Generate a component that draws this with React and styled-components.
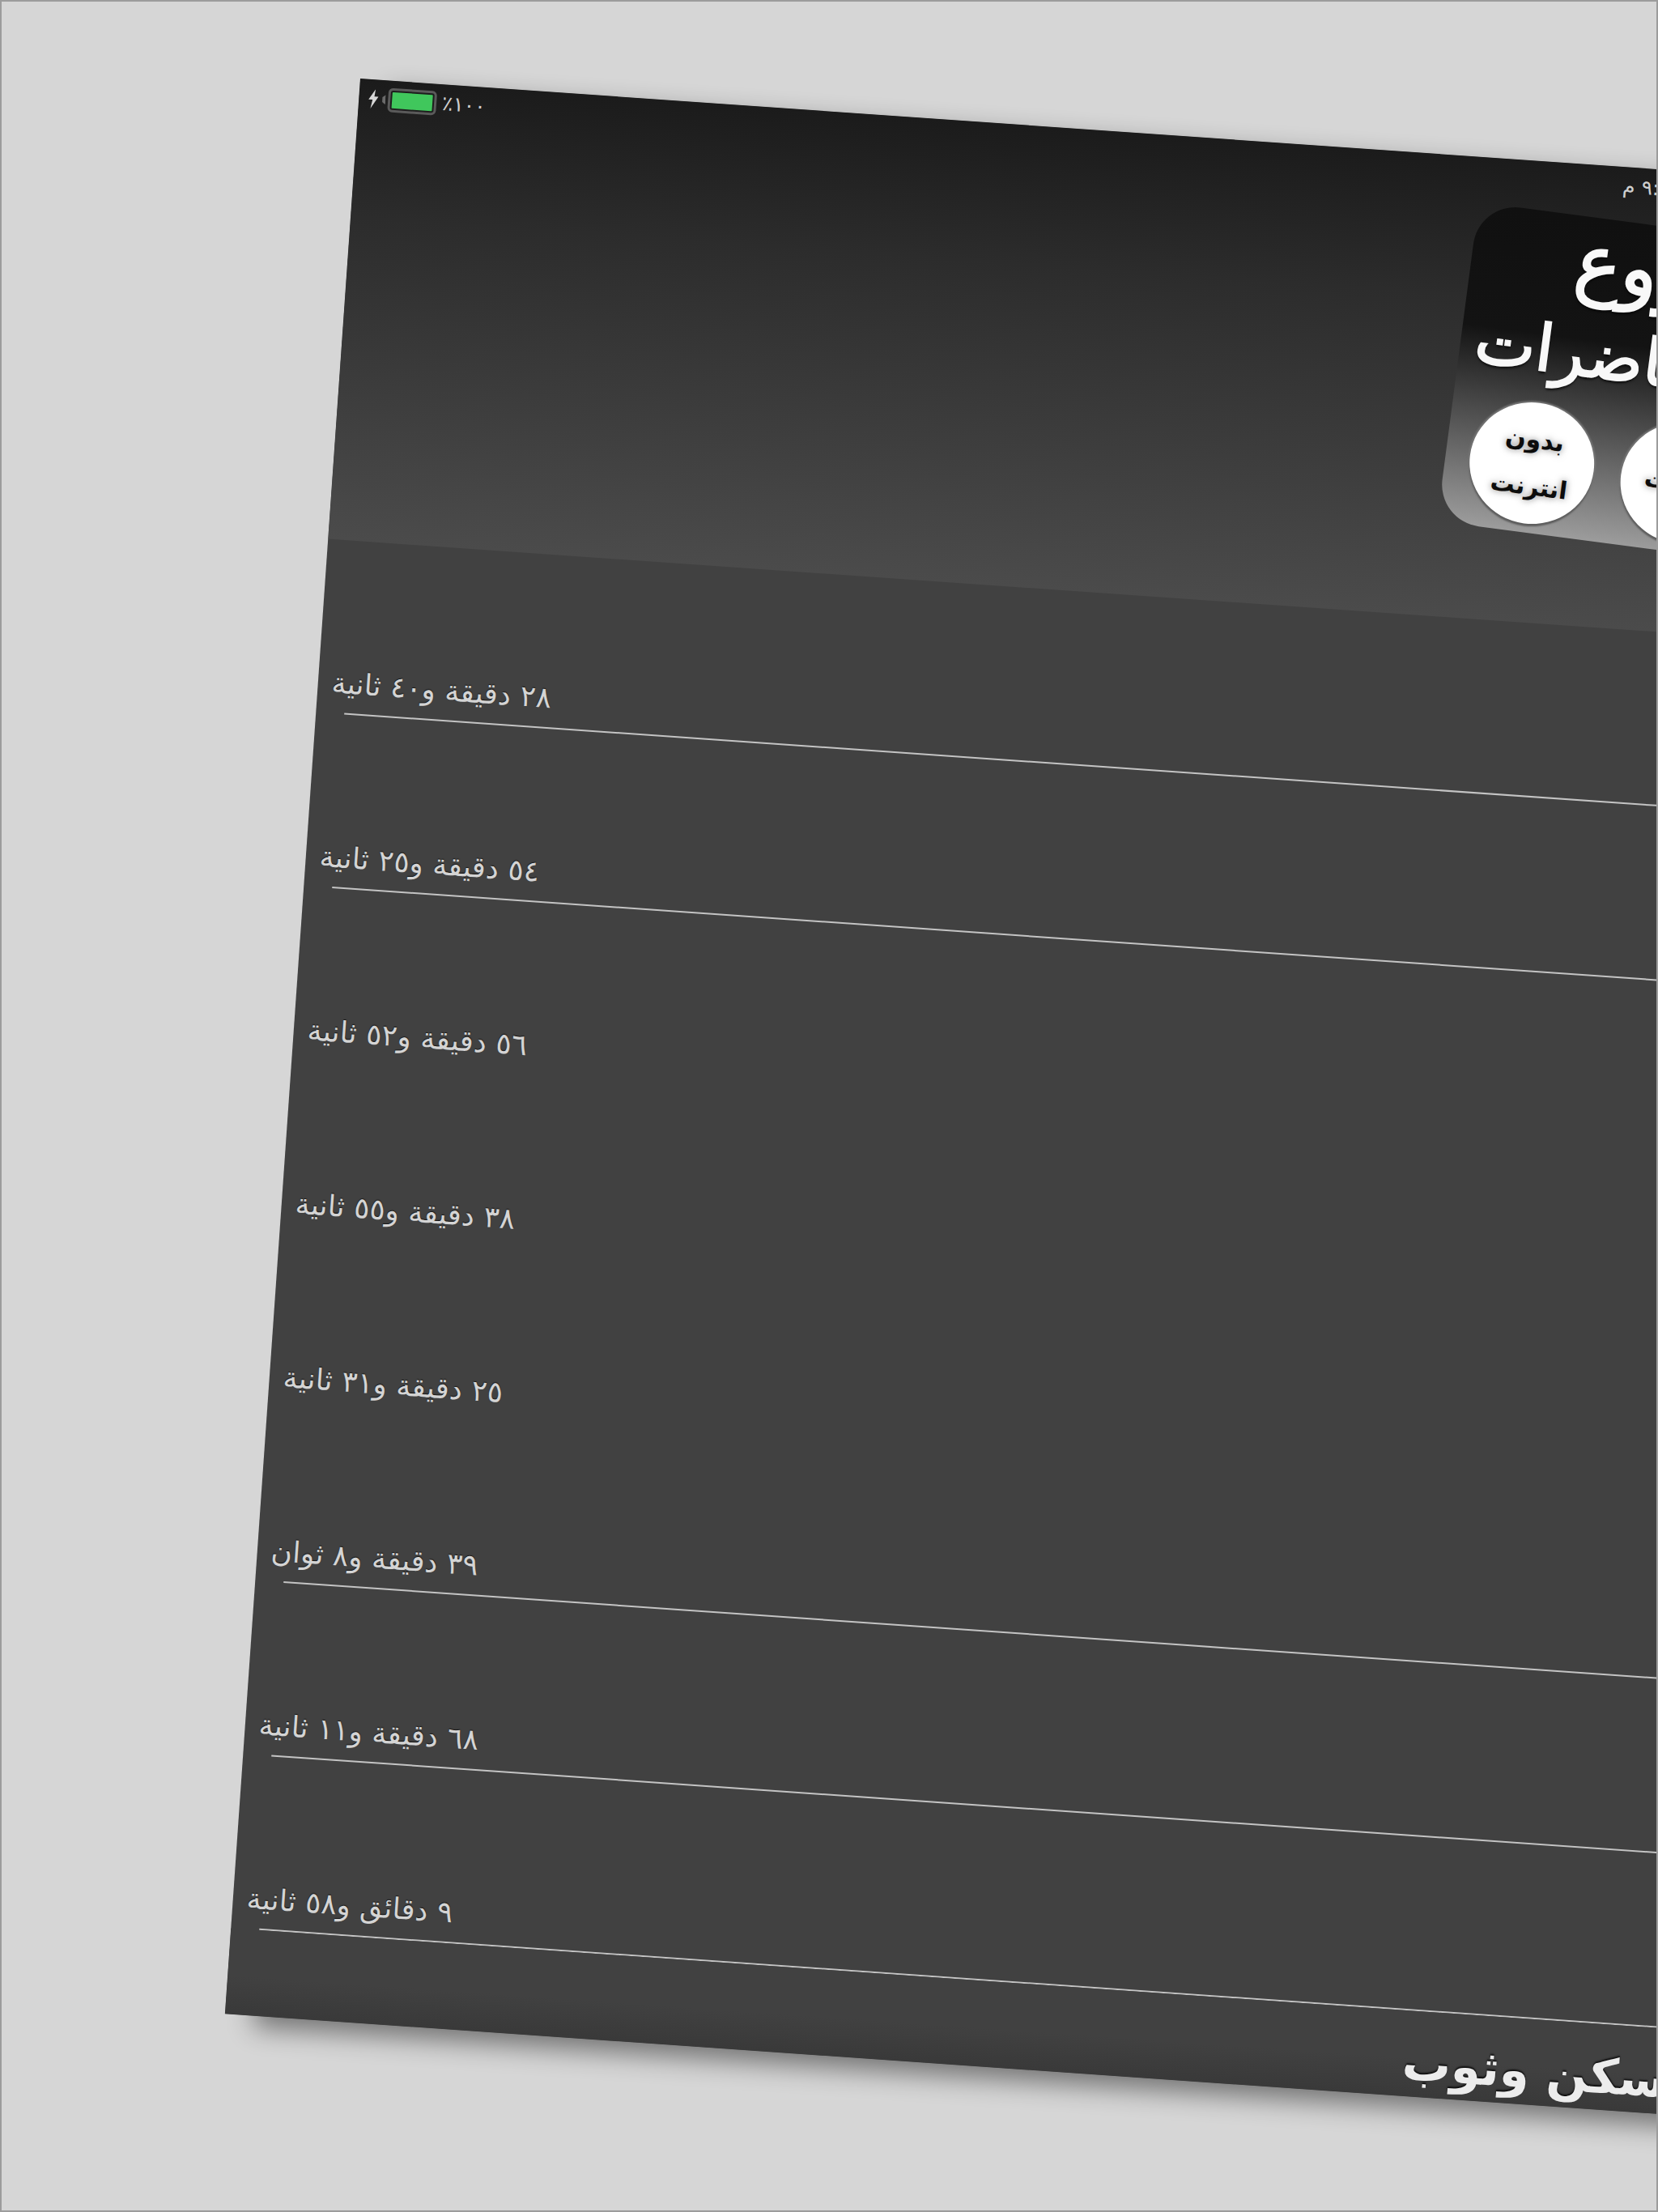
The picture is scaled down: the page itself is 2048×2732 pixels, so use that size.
import React from 'react';
import styled, { createGlobalStyle } from 'styled-components';

const Global = createGlobalStyle`
  html, body { margin: 0; padding: 0; background: #d6d6d6; overflow: hidden; }
`;

const Frame = styled.div`
  position: relative;
  width: 2048px;
  height: 2732px;
  box-sizing: border-box;
  border: 2px solid #9c9c9c;
  background: #d6d6d6;
  overflow: hidden;
  font-family: "DejaVu Sans", "Noto Sans", sans-serif;
`;

const Screen = styled.div`
  position: absolute;
  left: 443px;
  top: 95px;
  width: 1797px;
  height: 2396px;
  transform: rotate(4deg);
  transform-origin: 0 0;
  background: #414141;
  box-shadow: 36px 14px 32px rgba(0, 0, 0, 0.46);
  overflow: hidden;
  display: flex;
  flex-direction: column;
`;

const Header = styled.header`
  position: relative;
  height: 570px;
  flex: none;
  background: linear-gradient(to bottom, #1b1b1b 0%, #2c2c2c 30%, #4b4b4b 100%);
`;

const StatusBar = styled.div`
  height: 47px;
  display: flex;
  align-items: center;
  justify-content: space-between;
  padding: 0 160px 0 11px;
  color: #cfcfcf;
  font-size: 25px;
`;

const BatteryGroup = styled.div`
  display: flex;
  align-items: center;
  gap: 3px;
`;

const Battery = styled.div`
  width: 50px;
  height: 20px;
  border: 3px solid #5a5a5a;
  border-radius: 6px;
  padding: 2px;
  box-sizing: content-box;
`;

const BatteryFill = styled.div`
  width: 100%;
  height: 100%;
  background: #40c75c;
  border-radius: 1px;
`;

const Percent = styled.span`
  margin-left: 4px;
  direction: rtl;
  letter-spacing: 3px;
`;

const Time = styled.span`
  direction: rtl;
  letter-spacing: 1px;
`;

const HeaderBody = styled.div`
  padding: 9px 0 0 1389px;
  width: 620px;
`;

const Card = styled.section`
  width: 600px;
  height: 397px;
  box-sizing: border-box;
  padding: 2px 0 0 18px;
  border-radius: 52px;
  background: linear-gradient(to bottom, #101010 0%, #131313 38%, #9c9c9c 100%);
  transform: rotate(3.5deg);
  transform-origin: 0 0;
  direction: rtl;
  display: flex;
  flex-direction: column;
`;

const Title = styled.h1`
  margin: 0;
  height: 234px;
  font-weight: 400;
  color: #f8f8f8;
  text-align: left;
  text-shadow: 0 3px 3px rgba(0, 0, 0, 0.75);
  -webkit-text-stroke: 2px #f8f8f8;
  white-space: nowrap;
`;

const TitleLine = styled.div`
  font-size: ${p => p.$size}px;
  line-height: ${p => p.$leading}px;
  padding-left: ${p => p.$inset}px;
`;

const Bubbles = styled.div`
  display: flex;
  gap: 34px;
  padding-left: 12px;
  direction: ltr;
`;

const Bubble = styled.button`
  width: 154px;
  height: 150px;
  flex: none;
  padding: 0;
  border: none;
  border-radius: 50%;
  background: #fff;
  color: #0c0c0c;
  font-family: inherit;
  font-size: 30px;
  font-weight: 700;
  line-height: 58px;
  box-shadow: 0 3px 2px #5e5e5e, 0 0 2px 2px #767676;
  text-shadow: 0 0 8px rgba(0, 0, 0, 0.5);
  direction: rtl;
`;

const List = styled.div`
  flex: none;
`;

const Row = styled.div`
  height: 215px;
  box-sizing: border-box;
  display: flex;
  flex-direction: column;
  justify-content: flex-end;
`;

const RowLabel = styled.div`
  padding-left: 17px;
  margin-bottom: 14px;
  color: #d4d4d4;
  font-size: 36px;
  line-height: 44px;
  text-align: left;
  direction: rtl;
  text-shadow: 0 -1px 1px rgba(0, 0, 0, 0.7);
`;

const RowLine = styled.div`
  height: 2px;
  margin-left: 35px;
  background: ${p => (p.$visible ? '#c4c4c4' : 'transparent')};
`;

const Footer = styled.footer`
  flex: 1;
  align-self: flex-start;
  width: 2300px;
  box-sizing: border-box;
  padding: 24px 0 0 1455px;
  background: linear-gradient(to bottom, #414141 0%, #414141 55%, #393939 100%);
  color: #ececec;
  font-size: 60px;
  font-weight: 700;
  line-height: 80px;
  white-space: nowrap;
  direction: rtl;
  text-align: left;
  text-shadow: 0 -2px 2px rgba(0, 0, 0, 0.8);
`;

const rows = [
  ['٢٨ دقيقة و٤٠ ثانية', true],
  ['٥٤ دقيقة و٢٥ ثانية', true],
  ['٥٦ دقيقة و٥٢ ثانية', false],
  ['٣٨ دقيقة و٥٥ ثانية', false],
  ['٢٥ دقيقة و٣١ ثانية', false],
  ['٣٩ دقيقة و٨ ثوان', true],
  ['٦٨ دقيقة و١١ ثانية', true],
  ['٩ دقائق و٥٨ ثانية', true],
];

const Bolt = () => (
  <svg width="14" height="24" viewBox="0 0 14 24">
    <polygon points="9,0 1,13 6,13 4,24 13,9 8,9" fill="#d8d8d8" />
  </svg>
);

const BatteryTip = () => (
  <svg width="5" height="12" viewBox="0 0 5 12">
    <path d="M5 0 L5 12 L1 9 L1 3 Z" fill="#6a6a6a" />
  </svg>
);

export default function App() {
  return (
    <Frame>
      <Global />
      <Screen>
        <Header>
          <StatusBar>
            <BatteryGroup>
              <Bolt />
              <BatteryTip />
              <Battery><BatteryFill /></Battery>
              <Percent>١٠٠٪</Percent>
            </BatteryGroup>
            <Time>٩:٢٠ م</Time>
          </StatusBar>
          <HeaderBody>
            <Card>
              <Title>
                <TitleLine $size={96} $leading={106} $inset={110}>مشروع</TitleLine>
                <TitleLine $size={80} $leading={122} $inset={0}>المحاضرات</TitleLine>
              </Title>
              <Bubbles>
                <Bubble>بدون<br />انترنت</Bubble>
                <Bubble>انترنت</Bubble>
              </Bubbles>
            </Card>
          </HeaderBody>
        </Header>
        <List>
          {rows.map(([label, line]) => (
            <Row key={label}>
              <RowLabel>{label}</RowLabel>
              <RowLine $visible={line} />
            </Row>
          ))}
        </List>
        <Footer>مسكن وثوب</Footer>
      </Screen>
    </Frame>
  );
}
